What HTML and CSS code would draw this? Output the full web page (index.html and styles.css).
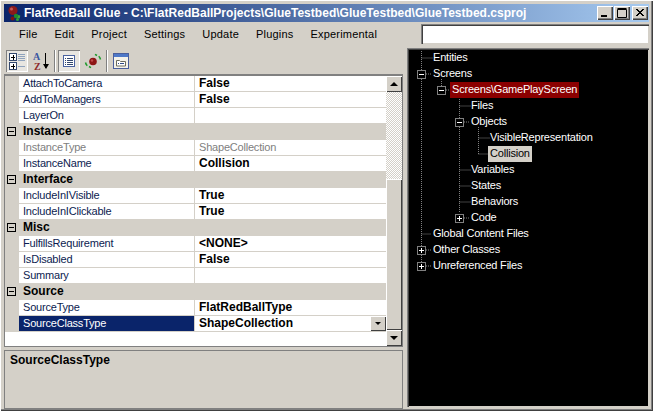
FILE: index.html
```html
<!DOCTYPE html>
<html lang="en">
<head>
    <meta charset="UTF-8">
    <title>FlatRedBall Glue</title>
    <link rel="stylesheet" href="styles.css">
</head>
<body>
<div class="window">
    <div class="titlebar">
        <svg class="app-icon" width="14" height="16" viewBox="0 0 14 16">
            <circle cx="5" cy="5.500" r="4.500" fill="#8b1a1a"/>
            <circle cx="3.500" cy="4" r="1.500" fill="#c25a5a"/>
            <path d="M7 11l5 1" stroke="#35a83f" stroke-width="3"/>
            <circle cx="8" cy="11" r="2.200" fill="#1f8a2c"/>
            <circle cx="4.500" cy="13.500" r="2" fill="#7a1414"/>
            <circle cx="9.500" cy="14.500" r="1.500" fill="#2f9e3a"/>
        </svg>
        <span class="title-text">FlatRedBall Glue - C:\FlatRedBallProjects\GlueTestbed\GlueTestbed\GlueTestbed.csproj</span>
        <div class="caption-buttons">
            <div class="caption-btn"><svg width="10" height="10" viewBox="0 0 10 10"><rect x="1" y="7" width="6" height="2" fill="#000"/></svg></div>
            <div class="caption-btn"><svg width="10" height="10" viewBox="0 0 10 10"><path d="M0.500 1.500h9v8h-9z M0.500 0.500h9" fill="none" stroke="#000"/></svg></div>
            <div class="caption-btn close"><svg width="10" height="10" viewBox="0 0 10 10"><path d="M1 1l7 7M2 1l7 7M8 1l-7 7M9 1l-7 7" fill="none" stroke="#000"/></svg></div>
        </div>
    </div>

    <div class="menubar">
        <span class="menu-item">File</span>
        <span class="menu-item">Edit</span>
        <span class="menu-item">Project</span>
        <span class="menu-item">Settings</span>
        <span class="menu-item">Update</span>
        <span class="menu-item">Plugins</span>
        <span class="menu-item">Experimental</span>
        <div class="search-box"></div>
    </div>

    <div class="main">
        <div class="left-pane">
            <div class="toolbar">
                <div class="tool-btn toggled">
                    <svg width="17" height="17" viewBox="0 0 17 17">
                        <rect x="0.500" y="0.500" width="7" height="7" fill="#fff" stroke="#33486e"/>
                        <path d="M2 4.500h4M4.500 2v5" stroke="#000"/>
                        <rect x="0.500" y="9.500" width="7" height="7" fill="#fff" stroke="#33486e"/>
                        <path d="M2 13.500h4M4.500 11v5" stroke="#000"/>
                        <path d="M9 1.500h7M9 3.500h7M9 5.500h7M9 7.500h7M9 13.500h7" stroke="#8fa3bd"/>
                    </svg>
                </div>
                <div class="tool-btn">
                    <svg width="17" height="19" viewBox="0 0 17 19">
                        <text class="az-a" x="0" y="8">A</text>
                        <text class="az-z" x="1" y="18">Z</text>
                        <path d="M12.500 1v15" stroke="#000"/>
                        <path d="M10 12h6l-3 5z" fill="#000"/>
                    </svg>
                </div>
                <div class="tool-sep"></div>
                <div class="tool-btn toggled">
                    <svg width="14" height="14" viewBox="0 0 14 14">
                        <rect x="1.500" y="1.500" width="11" height="11" fill="#fff" stroke="#4a63a0"/>
                        <path d="M3 4.500h1M5 4.500h6M3 6.500h1M5 6.500h6M3 8.500h1M5 8.500h6M3 10.500h1M5 10.500h6" stroke="#33486e"/>
                    </svg>
                </div>
                <div class="tool-btn">
                    <svg width="18" height="16" viewBox="0 0 18 16">
                        <circle cx="9" cy="8.500" r="3.800" fill="#8e1616"/>
                        <circle cx="8" cy="7.500" r="1.200" fill="#c04848"/>
                        <path d="M1.500 9.500c0.300 1.500 0.800 2.300 1.800 3.200M5 13.500l2 1.200" fill="none" stroke="#1f9a2c" stroke-width="1.500"/>
                        <path d="M16.500 6.500c-0.300-1.500-0.800-2.300-1.800-3.200M13 2.500l-2-1.200" fill="none" stroke="#1f9a2c" stroke-width="1.500"/>
                    </svg>
                </div>
                <div class="tool-sep"></div>
                <div class="tool-btn">
                    <svg width="16" height="16" viewBox="0 0 16 16">
                        <rect x="0.500" y="0.500" width="15" height="15" fill="#f4f2ea" stroke="#4a5f9c"/>
                        <rect x="1" y="1" width="14" height="3" fill="#4e78c8"/>
                        <path d="M3.500 7.500h3l1 1h5v4.500h-9z" fill="#fff" stroke="#6b6b5e"/>
                        <path d="M5 10.500h1M7 10.500h4" stroke="#2f4a86"/>
                    </svg>
                </div>
            </div>

            <div class="grid">
                <div class="grid-rows">
                    <div class="row"><div class="gutter"></div><div class="name">AttachToCamera</div><div class="value">False</div></div>
                    <div class="row"><div class="gutter"></div><div class="name">AddToManagers</div><div class="value">False</div></div>
                    <div class="row"><div class="gutter"></div><div class="name">LayerOn</div><div class="value"></div></div>
                    <div class="row category"><div class="gutter"><span class="minus"></span></div>Instance</div>
                    <div class="row disabled"><div class="gutter"></div><div class="name">InstanceType</div><div class="value">ShapeCollection</div></div>
                    <div class="row"><div class="gutter"></div><div class="name">InstanceName</div><div class="value">Collision</div></div>
                    <div class="row category"><div class="gutter"><span class="minus"></span></div>Interface</div>
                    <div class="row"><div class="gutter"></div><div class="name">IncludeInIVisible</div><div class="value">True</div></div>
                    <div class="row"><div class="gutter"></div><div class="name">IncludeInIClickable</div><div class="value">True</div></div>
                    <div class="row category"><div class="gutter"><span class="minus"></span></div>Misc</div>
                    <div class="row"><div class="gutter"></div><div class="name">FulfillsRequirement</div><div class="value">&lt;NONE&gt;</div></div>
                    <div class="row"><div class="gutter"></div><div class="name">IsDisabled</div><div class="value">False</div></div>
                    <div class="row"><div class="gutter"></div><div class="name">Summary</div><div class="value"></div></div>
                    <div class="row category"><div class="gutter"><span class="minus"></span></div>Source</div>
                    <div class="row"><div class="gutter"></div><div class="name">SourceType</div><div class="value">FlatRedBallType</div></div>
                    <div class="row selected"><div class="gutter"></div><div class="name">SourceClassType</div><div class="value">ShapeCollection<span class="combo-btn"><i class="arrow-down small"></i></span></div></div>
                </div>
                <div class="scrollbar">
                    <div class="scroll-btn"><i class="arrow-up"></i></div>
                    <div class="scroll-track"></div>
                    <div class="scroll-thumb"></div>
                    <div class="scroll-btn"><i class="arrow-down"></i></div>
                </div>
            </div>

            <div class="help">SourceClassType</div>
        </div>

        <div class="tree">
            <svg class="tree-lines" width="241" height="240" viewBox="407 47 241 240">
                <g class="dots">
                    <path d="M421.500 50v196M421.500 57h11M426 73h6M426 249h6M426 265h6M421.500 233h10M421.500 246v15"/>
                    <path d="M441.500 78v7M446 89h4"/>
                    <path d="M459.500 94v118M459.500 105h11M464 121h6M459.500 169h11M459.500 185h11M459.500 201h11M464 217h6"/>
                    <path d="M478.500 126v27M478.500 137h11M478.500 153h10"/>
                </g>
                <g class="box">
                    <rect x="417.500" y="69.500" width="8" height="8"/><path class="sign" d="M419 73.500h5"/>
                    <rect x="437.500" y="85.500" width="8" height="8"/><path class="sign" d="M439 89.500h5"/>
                    <rect x="455.500" y="117.500" width="8" height="8"/><path class="sign" d="M457 121.500h5"/>
                    <rect x="455.500" y="213.500" width="8" height="8"/><path class="sign" d="M457 217.500h5M459.500 215v5"/>
                    <rect x="417.500" y="245.500" width="8" height="8"/><path class="sign" d="M419 249.500h5M421.500 247v5"/>
                    <rect x="417.500" y="261.500" width="8" height="8"/><path class="sign" d="M419 265.500h5M421.500 263v5"/>
                </g>
            </svg>
            <div class="node lvl0">Entities</div>
            <div class="node lvl0">Screens</div>
            <div class="node lvl1"><span class="current">Screens\GamePlayScreen</span></div>
            <div class="node lvl2">Files</div>
            <div class="node lvl2">Objects</div>
            <div class="node lvl3">VisibleRepresentation</div>
            <div class="node lvl3"><span class="picked">Collision</span></div>
            <div class="node lvl2">Variables</div>
            <div class="node lvl2">States</div>
            <div class="node lvl2">Behaviors</div>
            <div class="node lvl2">Code</div>
            <div class="node lvl0">Global Content Files</div>
            <div class="node lvl0">Other Classes</div>
            <div class="node lvl0">Unreferenced Files</div>
        </div>
    </div>
</div>
</body>
</html>
```

FILE: styles.css
```css
* {
    box-sizing: border-box;
}
html, body {
    margin: 0;
    padding: 0;
    overflow: hidden;
}
body {
    font-family: 'Liberation Sans', Arial, sans-serif;
    font-size: 11px;
    letter-spacing: -0.2px;
    color: #000;
    background-color: #d4d0c8;
}
.window {
    width: 653px;
    height: 411px;
    padding: 4px;
    display: flex;
    flex-direction: column;
    background-color: #d4d0c8;
    box-shadow: inset 1px 1px 0 #fff, inset -1px -1px 0 #404040, inset -2px -2px 0 #808080;
}

/* title bar */
.titlebar {
    height: 18px;
    flex: none;
    display: flex;
    align-items: center;
    background: linear-gradient(to right, #0a246a, #a6caf0);
    color: #fff;
    font-weight: bold;
    font-size: 12px;
    letter-spacing: 0.02px;
    padding: 0 1px 0 4px;
}
.app-icon {
    flex: none;
    margin-right: 2px;
}
.title-text {
    flex: 1;
    white-space: nowrap;
    overflow: hidden;
}
.caption-buttons {
    display: flex;
    flex: none;
}
.caption-btn {
    width: 16px;
    height: 14px;
    margin-left: 1px;
    background-color: #d4d0c8;
    display: flex;
    align-items: center;
    justify-content: center;
    box-shadow: inset 1px 1px 0 #fff, inset -1px -1px 0 #404040, inset -2px -2px 0 #808080;
}
.caption-btn.close {
    margin-left: 2px;
}

/* menu */
.menubar {
    height: 24px;
    flex: none;
    display: flex;
    align-items: center;
    font-size: 11px;
    letter-spacing: 0.2px;
    padding-left: 15px;
}
.menu-item {
    margin-right: 17px;
}
.search-box {
    position: absolute;
    left: 421px;
    top: 24px;
    width: 228px;
    height: 20px;
    background-color: #fff;
    box-shadow: inset 1px 1px 0 #808080, inset 2px 2px 0 #404040, inset -1px -1px 0 #d4d0c8;
}

.main {
    flex: 1;
    min-height: 0;
    display: flex;
    padding-top: 2px;
}
.left-pane {
    width: 399px;
    flex: none;
    display: flex;
    flex-direction: column;
}

/* toolbar */
.toolbar {
    height: 26px;
    flex: none;
    display: flex;
    align-items: center;
    padding-left: 2px;
}
.tool-btn {
    width: 22px;
    height: 22px;
    display: flex;
    align-items: center;
    justify-content: center;
    margin-right: 2px;
}
.tool-btn.toggled {
    background-color: #e8e6e1;
    box-shadow: inset 1px 1px 0 #808080, inset -1px -1px 0 #fff;
}
.tool-sep {
    width: 2px;
    height: 22px;
    margin: 0 2px 0 0;
    border-left: 1px solid #808080;
    border-right: 1px solid #fff;
}
.az-a, .az-z {
    font-family: 'Liberation Serif', serif;
    font-size: 10px;
    font-weight: bold;
}
.az-a {
    fill: #3a56a0;
}
.az-z {
    fill: #8e2a2a;
}

/* property grid */
.grid {
    height: 273px;
    flex: none;
    display: flex;
    background-color: #fff;
    border-top: 2px solid #808080;
    border-left: 1px solid #808080;
    border-bottom: 1px solid #808080;
    border-right: 1px solid #808080;
}
.grid-rows {
    flex: 1;
    min-width: 0;
}
.row {
    height: 16px;
    display: flex;
    line-height: 15px;
    border-bottom: 1px solid #d4d0c8;
    background-color: #d4d0c8;
}
.gutter {
    width: 14px;
    flex: none;
    display: flex;
    align-items: center;
    padding-left: 2px;
}
.name {
    width: 176px;
    flex: none;
    padding-left: 4px;
    background-color: #fff;
    border-right: 1px solid #d4d0c8;
    color: #0c1c50;
    white-space: nowrap;
}
.value {
    flex: 1;
    display: flex;
    justify-content: space-between;
    background-color: #fff;
    padding-left: 4px;
    font-weight: bold;
    font-size: 12px;
    letter-spacing: 0;
}
.category {
    font-weight: bold;
    font-size: 12px;
    letter-spacing: 0;
    color: #000;
}
.category .gutter {
    margin-right: 4px;
}
.minus {
    width: 9px;
    height: 9px;
    border: 1px solid #000;
    position: relative;
}
.minus::after {
    content: "";
    position: absolute;
    left: 1px;
    top: 3px;
    width: 5px;
    height: 1px;
    background-color: #000;
}
.disabled .name, .disabled .value {
    color: #808080;
    font-weight: normal;
}
.disabled .value {
    font-size: 11px;
    letter-spacing: -0.2px;
}
.selected .name {
    background-color: #0a246a;
    color: #fff;
}
.combo-btn {
    width: 16px;
    height: 15px;
    display: flex;
    align-items: center;
    justify-content: center;
    background-color: #d4d0c8;
    box-shadow: inset 1px 1px 0 #fff, inset -1px -1px 0 #404040;
}

/* scrollbar */
.scrollbar {
    width: 16px;
    flex: none;
    display: flex;
    flex-direction: column;
}
.scroll-btn {
    height: 16px;
    flex: none;
    display: flex;
    align-items: center;
    justify-content: center;
    background-color: #d4d0c8;
    box-shadow: inset 1px 1px 0 #fff, inset -1px -1px 0 #404040;
}
.scroll-track {
    height: 87px;
    flex: none;
    background-color: #fff;
    background-image: conic-gradient(#d4d0c8 25%, #fff 0 50%, #d4d0c8 0 75%, #fff 0);
    background-size: 2px 2px;
}
.scroll-thumb {
    flex: 1;
    background-color: #d4d0c8;
    box-shadow: inset 1px 1px 0 #fff, inset -1px -1px 0 #404040;
}
.arrow-up, .arrow-down {
    display: block;
    width: 0;
    height: 0;
    border-left: 4px solid transparent;
    border-right: 4px solid transparent;
}
.arrow-up {
    border-bottom: 4px solid #000;
}
.arrow-down {
    border-top: 4px solid #000;
}
.arrow-down.small {
    border-left-width: 3px;
    border-right-width: 3px;
    border-top-width: 3px;
}

/* help panel */
.help {
    height: 59px;
    flex: none;
    margin-top: 3px;
    border: 1px solid #808080;
    padding: 2px 5px;
    font-weight: bold;
    font-size: 12px;
    letter-spacing: 0;
}

/* tree */
.tree {
    flex: 1;
    min-width: 0;
    margin-left: 4px;
    background-color: #000;
    color: #fff;
    position: relative;
    padding-top: 2px;
    box-shadow: inset 1px 1px 0 #808080, inset 2px 2px 0 #404040, inset -1px -1px 0 #d4d0c8;
    white-space: nowrap;
}
.tree-lines {
    position: absolute;
    left: 0;
    top: 0;
}
.dots path {
    fill: none;
    stroke: #808080;
    stroke-dasharray: 1 1;
}
.box rect {
    fill: #000;
    stroke: #808080;
}
.box .sign {
    fill: none;
    stroke: #fff;
}
.node {
    height: 16px;
    line-height: 14px;
    position: relative;
}
.lvl0 {
    padding-left: 26px;
}
.lvl1 {
    padding-left: 43px;
}
.lvl2 {
    padding-left: 64px;
}
.lvl3 {
    padding-left: 83px;
}
.current, .picked {
    display: inline-block;
    height: 16px;
    line-height: 14px;
    padding: 0 2px;
}
.current {
    background-color: #8b0000;
}
.picked {
    background-color: #d4d0c8;
    color: #000;
    margin-left: -2px;
}
```
